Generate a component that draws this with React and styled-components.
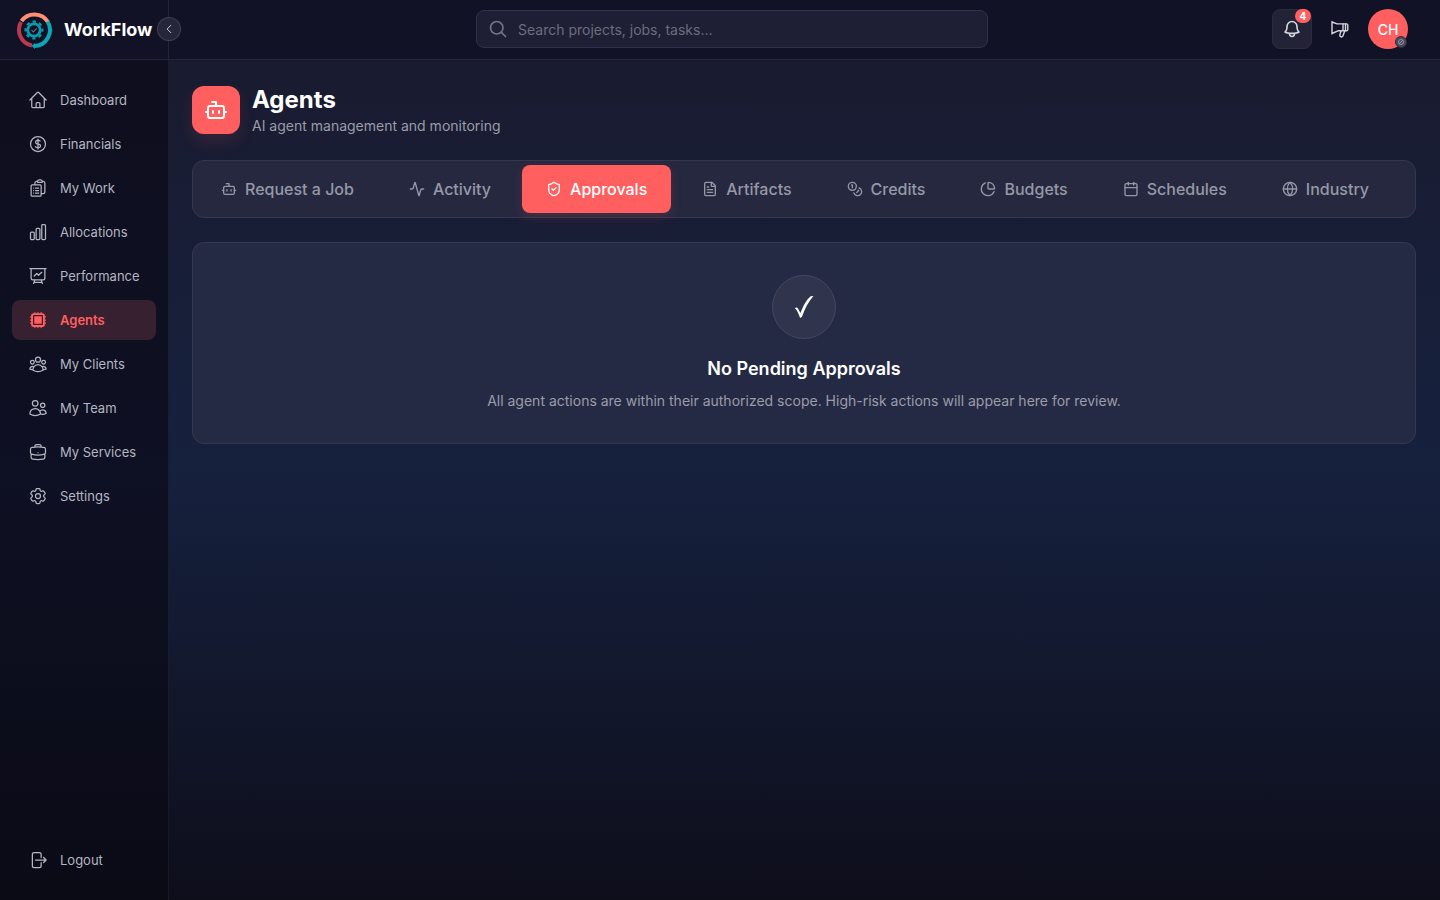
import React from 'react';
import styled, { createGlobalStyle, css } from 'styled-components';
import {
  HiOutlineHome,
  HiOutlineCurrencyDollar,
  HiOutlineClipboardDocumentList,
  HiOutlineChartBar,
  HiOutlinePresentationChartLine,
  HiCpuChip,
  HiOutlineUserGroup,
  HiOutlineUsers,
  HiOutlineBriefcase,
  HiOutlineCog6Tooth,
  HiOutlineArrowRightOnRectangle,
  HiOutlineMagnifyingGlass,
  HiOutlineBell,
  HiOutlineChevronLeft,
} from 'react-icons/hi2';
import {
  Bot,
  Activity,
  ShieldCheck,
  FileText,
  Coins,
  ChartPie,
  Calendar,
  Globe,
} from 'lucide-react';

const accent = '#ff5f5f';
const line = 'rgba(255, 255, 255, 0.08)';

const GlobalStyle = createGlobalStyle`
  * {
    box-sizing: border-box;
  }

  body {
    margin: 0;
    background: #0b0b17;
    color: #ffffff;
    font-family: Inter, 'Liberation Sans', sans-serif;
    font-size: 14px;
    -webkit-font-smoothing: antialiased;
  }

  button,
  input {
    font: inherit;
    color: inherit;
  }
`;

const Page = styled.div`
  display: flex;
  flex-direction: column;
  min-height: 100vh;
  background: linear-gradient(180deg, #1a1a2e 0%, #16213e 52%, #0e0e1b 100%);
`;

const TopBar = styled.header`
  display: flex;
  height: 60px;
  background: #111226;
  border-bottom: 1px solid ${line};
`;

const Brand = styled.div`
  position: relative;
  display: flex;
  align-items: center;
  gap: 10px;
  flex: 0 0 169px;
  padding-left: 16px;
  border-right: 1px solid ${line};
`;

const BrandName = styled.span`
  font-size: 18px;
  font-weight: 700;
  line-height: 28px;
`;

const CollapseButton = styled.button`
  position: absolute;
  right: -13px;
  top: 17px;
  display: flex;
  align-items: center;
  justify-content: center;
  width: 24px;
  height: 24px;
  padding: 0;
  border: 1px solid rgba(255, 255, 255, 0.12);
  border-radius: 50%;
  background: #25263a;
  color: #c5c7d0;
  cursor: pointer;

  svg {
    stroke-width: 2;
  }
`;

const TopBarMain = styled.div`
  display: flex;
  flex: 1;
  align-items: center;
  padding: 0 32px 1px 23px;
`;

const SearchArea = styled.div`
  display: flex;
  flex: 1;
  justify-content: center;
`;

const SearchBox = styled.label`
  display: flex;
  align-items: center;
  gap: 10px;
  width: 100%;
  max-width: 512px;
  height: 38px;
  padding: 0 11px;
  border: 1px solid #30324a;
  border-radius: 8px;
  background: #1e1f35;
  color: #737686;

  svg {
    stroke-width: 2;
  }
`;

const SearchInput = styled.input`
  flex: 1;
  padding: 0;
  border: 0;
  outline: 0;
  background: transparent;
  font-size: 14px;

  &::placeholder {
    color: #6a6d7e;
    opacity: 1;
  }
`;

const Actions = styled.div`
  display: flex;
  align-items: center;
  gap: 8px;
`;

const IconButton = styled.button`
  position: relative;
  display: flex;
  align-items: center;
  justify-content: center;
  width: 40px;
  height: 40px;
  padding: 0;
  border: 1px solid ${props => (props.$filled ? '#2d2a3d' : 'transparent')};
  border-radius: 8px;
  background: ${props => (props.$filled ? '#222337' : 'transparent')};
  color: #d4d5dc;
  cursor: pointer;

  svg {
    stroke-width: ${props => (props.$filled ? 2 : 1.4)};
  }
`;

const CountBadge = styled.span`
  position: absolute;
  top: -1px;
  right: 0;
  width: 16px;
  height: 14px;
  border-radius: 7px;
  background: ${accent};
  color: #ffffff;
  font-size: 10px;
  font-weight: 700;
  line-height: 14px;
  text-align: center;
`;

const Avatar = styled.button`
  position: relative;
  width: 40px;
  height: 40px;
  padding: 0;
  border: 0;
  border-radius: 50%;
  background: ${accent};
  color: #ffffff;
  font-size: 14px;
  font-weight: 500;
  cursor: pointer;
`;

const AvatarStatus = styled.span`
  position: absolute;
  right: 1px;
  bottom: 1px;
  display: flex;
  align-items: center;
  justify-content: center;
  width: 12px;
  height: 12px;
  border: 1px solid #2a2c40;
  border-radius: 50%;
  background: #4a4c5e;
`;

const Body = styled.div`
  display: flex;
  flex: 1;
`;

const Sidebar = styled.nav`
  display: flex;
  flex-direction: column;
  justify-content: space-between;
  flex: 0 0 169px;
  padding: 20px 12px;
  border-right: 1px solid rgba(255, 255, 255, 0.06);
  background: linear-gradient(180deg, #0e0e1e 0%, #0e1023 50%, #0b0b16 100%);
`;

const NavList = styled.ul`
  display: flex;
  flex-direction: column;
  gap: 4px;
  margin: 0;
  padding: 0;
  list-style: none;
`;

const itemStyle = css`
  display: flex;
  align-items: center;
  gap: 12px;
  width: 100%;
  height: 40px;
  padding: 0 16px;
  border: 0;
  border-radius: 8px;
  background: ${props => (props.$active ? '#37202f' : 'transparent')};
  color: ${props => (props.$active ? accent : '#b4b6c1')};
  font-size: 13px;
  font-weight: ${props => (props.$active ? 600 : 400)};
  white-space: nowrap;
  text-decoration: none;

  svg {
    flex: none;
  }
`;

const NavLink = styled.a`
  ${itemStyle}
`;

const LogoutButton = styled.button`
  ${itemStyle}
  cursor: pointer;
`;

const Main = styled.main`
  display: flex;
  flex: 1;
  flex-direction: column;
  gap: 24px;
  min-width: 0;
  padding: 24px 24px 24px 23px;
`;

const PageHeader = styled.div`
  display: flex;
  align-items: center;
  gap: 12px;
`;

const PageIcon = styled.div`
  display: flex;
  align-items: center;
  justify-content: center;
  width: 48px;
  height: 48px;
  border-radius: 12px;
  background: ${accent};
  box-shadow: 0 8px 16px rgba(255, 95, 95, 0.12);
`;

const PageTitle = styled.h1`
  margin: 0;
  font-size: 24px;
  font-weight: 700;
  line-height: 32px;
`;

const PageSubtitle = styled.p`
  margin: 0;
  color: #9a9ca9;
  font-size: 14px;
  line-height: 20px;
`;

const Tabs = styled.div`
  display: flex;
  gap: 7px;
  padding: 4px;
  border: 1px solid #35374d;
  border-radius: 12px;
  background: #25283f;
`;

const Tab = styled.button`
  display: flex;
  align-items: center;
  gap: 8px;
  height: 48px;
  padding: 0 24px;
  border: 0;
  border-radius: 8px;
  background: ${props => (props.$active ? accent : 'transparent')};
  box-shadow: ${props => (props.$active ? '0 4px 12px rgba(255, 95, 95, 0.15)' : 'none')};
  color: ${props => (props.$active ? '#ffffff' : '#9698a6')};
  font-size: 16px;
  font-weight: 500;
  white-space: nowrap;
  cursor: pointer;
`;

const EmptyCard = styled.section`
  display: flex;
  flex-direction: column;
  align-items: center;
  padding: 32px;
  border: 1px solid #35384f;
  border-radius: 12px;
  background: #252a44;
  text-align: center;
`;

const EmptyIcon = styled.div`
  display: flex;
  align-items: center;
  justify-content: center;
  width: 64px;
  height: 64px;
  margin-bottom: 16px;
  border: 1px solid #44475d;
  border-radius: 50%;
  background: #30344d;
`;

const EmptyTitle = styled.h2`
  margin: 0 0 8px;
  font-size: 18px;
  font-weight: 600;
  line-height: 28px;
`;

const EmptyText = styled.p`
  margin: 0;
  color: #9a9ca9;
  font-size: 14px;
  line-height: 20px;
`;

const Logo = () => (
  <svg width="38" height="38" viewBox="0 0 38 38" fill="none" aria-hidden="true">
    <path d="M5 11A16 16 0 0 0 16 34.500" stroke="#b83a4b" strokeWidth="4" />
    <path d="M5.500 10A16 16 0 0 1 32 11" stroke="#ff8f73" strokeWidth="4" />
    <path d="M31.500 10.500A16 16 0 0 1 18 35" stroke="#0ba7b5" strokeWidth="4" />
    <path d="M19 32l-3.500 3 3.500 3z" fill="#0ba7b5" />
    <circle cx="18" cy="19" r="6.200" stroke="#0b9aab" strokeWidth="2.800" />
    <circle
      cx="18"
      cy="19"
      r="8.400"
      stroke="#0b9aab"
      strokeWidth="2.200"
      strokeDasharray="3.299 3.299"
      strokeDashoffset="1.650"
    />
    <path d="M15.500 19l1.900 1.900 3.400-3.600" stroke="#5d6b80" strokeWidth="1.200" />
  </svg>
);

const Megaphone = () => (
  <svg
    width="20"
    height="20"
    viewBox="0 0 20 20"
    fill="none"
    stroke="currentColor"
    strokeLinejoin="round"
    strokeLinecap="round"
    aria-hidden="true"
  >
    <path d="M2 2.500v12.500M2 3l5 1.900h9.500a1.300 1.300 0 0 1 1.300 1.300v4.200a1.300 1.300 0 0 1-1.300 1.300H8.500L2 14.500" />
    <path d="M13 5v6.500M15.500 5v6.500" />
    <path d="M11 12l-1.200 4.200c-.3 1.900 2.500 2.400 3.200.6l1.700-4.800" />
  </svg>
);

const CheckMark = () => (
  <svg width="24" height="24" viewBox="0 0 24 24" fill="#ffffff" aria-hidden="true">
    <path d="M2.800 13.200c1.200-1 2.600-.8 3.300.5l2.400 4.200C11 11 14.500 4.700 18.700 1.200l2.700-.3C16.500 6.500 13 13 10 21.800l-1.900 1.200c-1-3.200-2.300-6-3.600-8.100-.4-.8-1-1.200-1.700-1.700z" />
  </svg>
);

const navItems = [
  { label: 'Dashboard', icon: HiOutlineHome },
  { label: 'Financials', icon: HiOutlineCurrencyDollar },
  { label: 'My Work', icon: HiOutlineClipboardDocumentList },
  { label: 'Allocations', icon: HiOutlineChartBar },
  { label: 'Performance', icon: HiOutlinePresentationChartLine },
  { label: 'Agents', icon: HiCpuChip, active: true },
  { label: 'My Clients', icon: HiOutlineUserGroup },
  { label: 'My Team', icon: HiOutlineUsers },
  { label: 'My Services', icon: HiOutlineBriefcase },
  { label: 'Settings', icon: HiOutlineCog6Tooth },
];

const tabs = [
  { label: 'Request a Job', icon: Bot },
  { label: 'Activity', icon: Activity },
  { label: 'Approvals', icon: ShieldCheck, active: true },
  { label: 'Artifacts', icon: FileText },
  { label: 'Credits', icon: Coins },
  { label: 'Budgets', icon: ChartPie },
  { label: 'Schedules', icon: Calendar },
  { label: 'Industry', icon: Globe },
];

const App = () => (
  <Page>
    <GlobalStyle />
    <TopBar>
      <Brand>
        <Logo />
        <BrandName>WorkFlow</BrandName>
        <CollapseButton type="button" aria-label="Collapse sidebar">
          <HiOutlineChevronLeft size={12} />
        </CollapseButton>
      </Brand>
      <TopBarMain>
        <SearchArea>
          <SearchBox>
            <HiOutlineMagnifyingGlass size={20} />
            <SearchInput
              type="text"
              aria-label="Search"
              placeholder="Search projects, jobs, tasks..."
            />
          </SearchBox>
        </SearchArea>
        <Actions>
          <IconButton type="button" aria-label="Notifications" $filled>
            <HiOutlineBell size={20} />
            <CountBadge>4</CountBadge>
          </IconButton>
          <IconButton type="button" aria-label="Announcements">
            <Megaphone />
          </IconButton>
          <Avatar type="button">
            CH
            <AvatarStatus>
              <svg width="8" height="8" viewBox="0 0 8 8" fill="none" stroke="#8d90a0" aria-hidden="true">
                <circle cx="4" cy="4" r="2.500" />
                <path d="M2 6l4-4" />
              </svg>
            </AvatarStatus>
          </Avatar>
        </Actions>
      </TopBarMain>
    </TopBar>
    <Body>
      <Sidebar>
        <NavList>
          {navItems.map(({ label, icon: Icon, active }) => (
            <li key={label}>
              <NavLink href="#" $active={active}>
                <Icon size={20} />
                {label}
              </NavLink>
            </li>
          ))}
        </NavList>
        <LogoutButton type="button">
          <HiOutlineArrowRightOnRectangle size={20} />
          Logout
        </LogoutButton>
      </Sidebar>
      <Main>
        <PageHeader>
          <PageIcon>
            <Bot size={24} />
          </PageIcon>
          <div>
            <PageTitle>Agents</PageTitle>
            <PageSubtitle>AI agent management and monitoring</PageSubtitle>
          </div>
        </PageHeader>
        <Tabs>
          {tabs.map(({ label, icon: Icon, active }) => (
            <Tab key={label} type="button" $active={active}>
              <Icon size={16} />
              {label}
            </Tab>
          ))}
        </Tabs>
        <EmptyCard>
          <EmptyIcon>
            <CheckMark />
          </EmptyIcon>
          <EmptyTitle>No Pending Approvals</EmptyTitle>
          <EmptyText>
            All agent actions are within their authorized scope. High-risk actions will appear here for review.
          </EmptyText>
        </EmptyCard>
      </Main>
    </Body>
  </Page>
);

export default App;
